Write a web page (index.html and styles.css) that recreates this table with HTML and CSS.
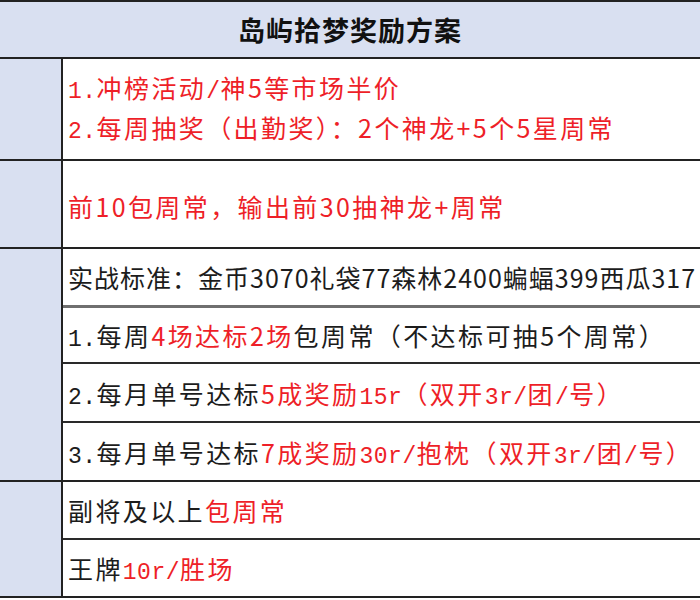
FILE: index.html
```html
<!DOCTYPE html>
<html lang="zh">
<head>
<meta charset="utf-8">
<title>岛屿拾梦奖励方案</title>
<link rel="stylesheet" href="styles.css">
</head>
<body>
<div class="sheet">
  <div class="title">岛屿拾梦奖励方案</div>

  <div class="section">
    <div class="side"></div>
    <div class="cells">
      <div class="cell c1 red multi">
        <div><span class="m">1.</span>冲榜活动<span class="m">/</span>神5等市场半价</div>
        <div><span class="m">2.</span>每周抽奖（出勤奖）：2个神龙+5个5星周常</div>
      </div>
    </div>
  </div>

  <div class="section">
    <div class="side"></div>
    <div class="cells">
      <div class="cell c2 red"><span>前10包周常，输出前30抽神龙+周常</span></div>
    </div>
  </div>

  <div class="section">
    <div class="side"></div>
    <div class="cells">
      <div class="cell c3a"><span>实战标准：金币3070礼袋77森林2400蝙蝠399西瓜317</span></div>
      <div class="cell c3b"><span><span class="m">1.</span>每周<span class="red">4场达标2场</span>包周常（不达标可抽5个周常）</span></div>
      <div class="cell c3c"><span><span class="m">2.</span>每月单号达标<span class="red">5成奖励<span class="m">15r</span>（双开<span class="m">3r/</span>团<span class="m">/</span>号）</span></span></div>
      <div class="cell c3d"><span><span class="m">3.</span>每月单号达标<span class="red">7成奖励<span class="m">30r/</span>抱枕（双开<span class="m">3r/</span>团<span class="m">/</span>号）</span></span></div>
    </div>
  </div>

  <div class="section">
    <div class="side"></div>
    <div class="cells">
      <div class="cell c4a"><span>副将及以上<span class="red">包周常</span></span></div>
      <div class="cell c4b"><span>王牌<span class="red"><span class="m">10r/</span>胜场</span></span></div>
    </div>
  </div>
</div>
</body>
</html>
```

FILE: styles.css
```css
html, body {
  margin: 0;
  padding: 0;
  background: #ffffff;
  overflow: hidden;
}

.sheet {
  width: 700px;
  border-top: 2px solid #222;
  font-family: "Noto Sans CJK SC", "Noto Sans", sans-serif;
  color: #1c1c1c;
}

.title {
  height: 55px;
  background: #d9e0f1;
  border-bottom: 2px solid #222;
  display: flex;
  align-items: center;
  justify-content: center;
  font-size: 27px;
  font-weight: 700;
  letter-spacing: 1px;
  color: #111;
}

.section {
  display: flex;
  border-bottom: 2px solid #222;
}

.side {
  width: 61px;
  flex: none;
  background: #d9e0f1;
  border-right: 2px solid #222;
}

.cells {
  flex: 1;
  min-width: 0;
  display: flex;
  flex-direction: column;
}

.cell {
  display: flex;
  flex: none;
  align-items: center;
  padding-left: 5px;
  white-space: nowrap;
  overflow: hidden;
  font-size: 25px;
  letter-spacing: 2.4px;
}

.multi {
  flex-direction: column;
  align-items: flex-start;
  justify-content: center;
  line-height: 35px;
  padding-top: 2px;
  height: 98px;
}

.red {
  color: #ee1f28;
}

.m {
  font-family: "Liberation Mono", monospace;
  font-size: 23px;
  letter-spacing: 0.5px;
}

.c2 { padding-top: 4px; height: 82px; }
.c3a { height: 56px; border-bottom: 3px solid #6f6f6f; letter-spacing: 1px; }
.c3b { height: 54px; border-bottom: 2px solid #2a2a2a; }
.c3c { height: 57px; border-bottom: 2px solid #2a2a2a; }
.c3d { height: 57px; }
.c4a { height: 56px; border-bottom: 2px solid #2a2a2a; }
.c4b { height: 56px; }
```
